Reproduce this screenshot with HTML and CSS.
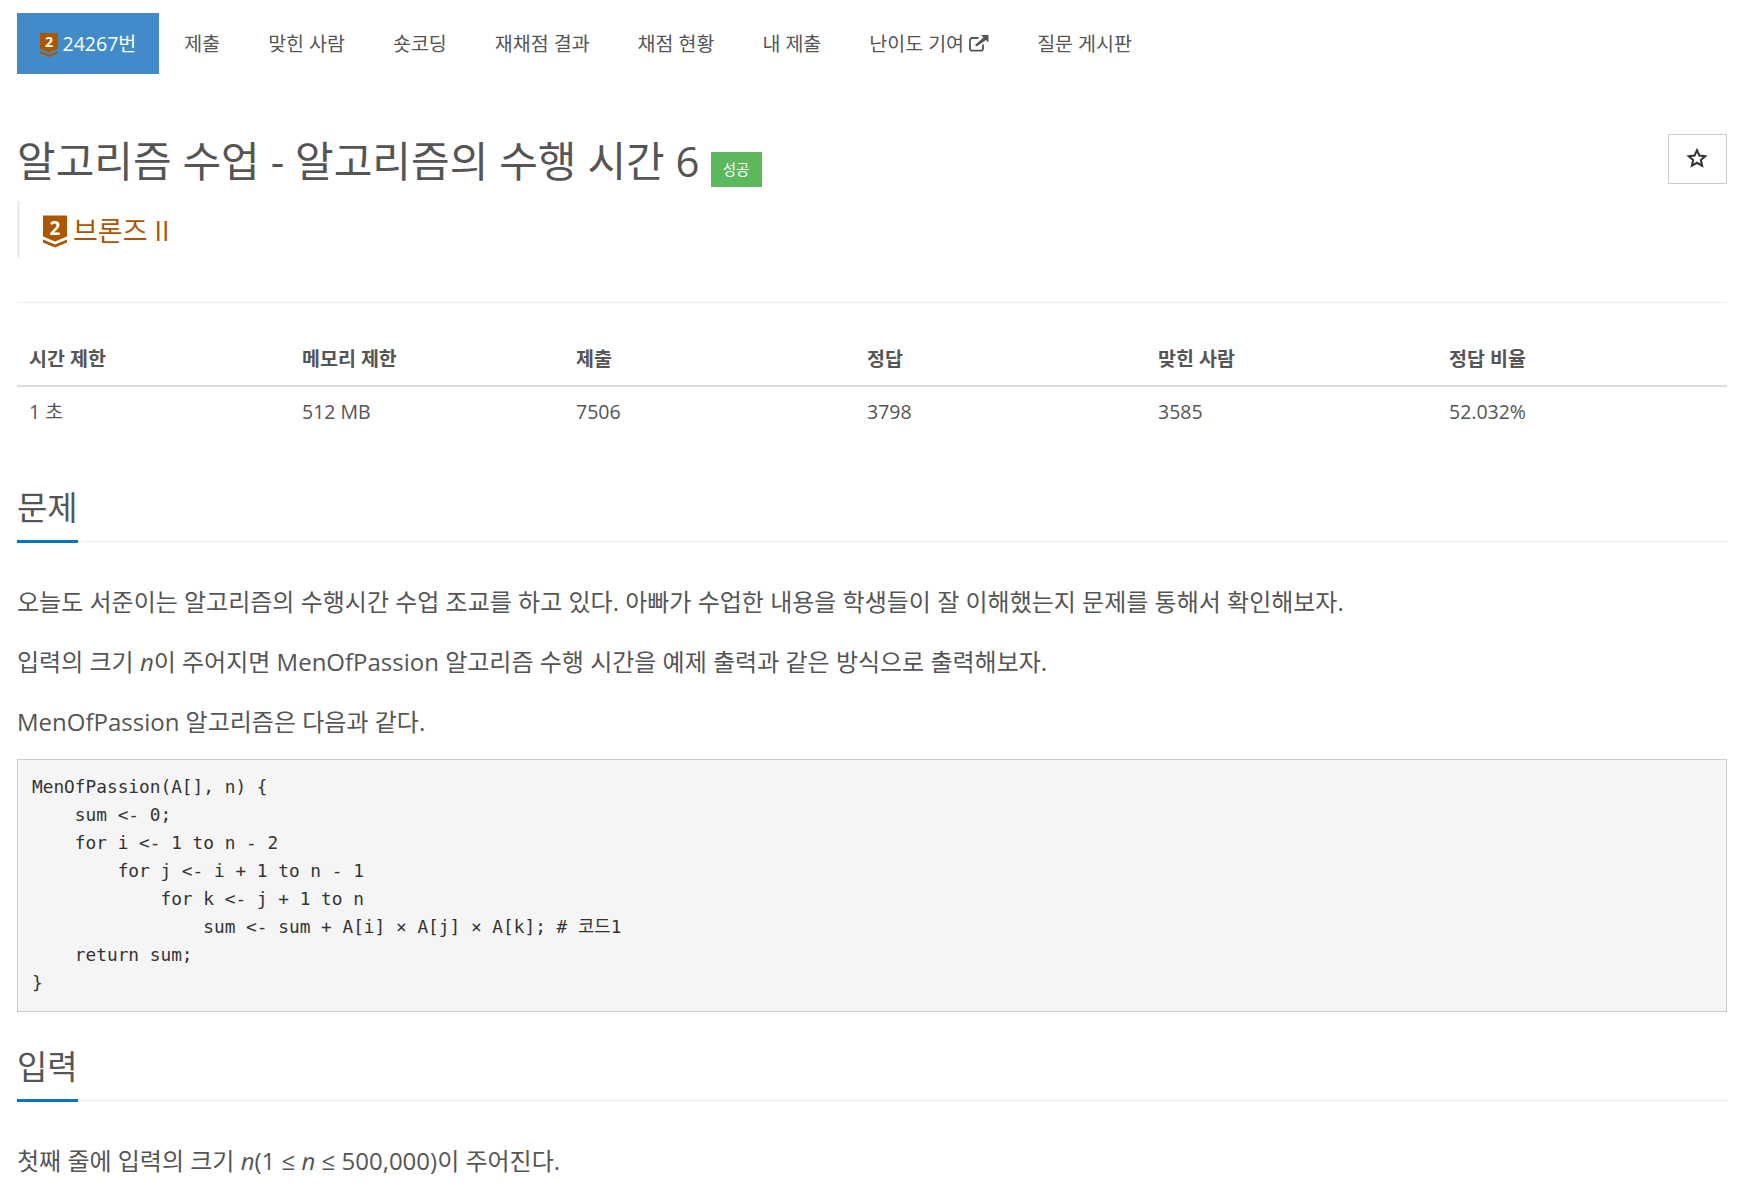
FILE: index.html
```html
<!DOCTYPE html>
<html lang="ko">
<head>
    <meta charset="UTF-8">
    <meta name="viewport" content="width=device-width, initial-scale=1.0">
    <title>24267번: 알고리즘 수업 - 알고리즘의 수행 시간 6</title>
    <link rel="stylesheet" href="styles.css">
</head>
<body>
    <ul class="tabs">
        <li class="active"><a href="#">
            <svg class="tier tier-small" viewBox="0 0 24 32"><path class="tier-fill" d="M0 0H24V21L12 26L0 21Z"/><path class="tier-fill" d="M0 24L12 29L24 24V27L12 32L0 27Z"/><text x="12" y="19" class="tier-num">2</text></svg>
            24267번</a></li>
        <li><a href="#">제출</a></li>
        <li><a href="#">맞힌 사람</a></li>
        <li><a href="#">숏코딩</a></li>
        <li><a href="#">재채점 결과</a></li>
        <li><a href="#">채점 현황</a></li>
        <li><a href="#">내 제출</a></li>
        <li><a href="#">난이도 기여
            <svg class="ext" viewBox="0 0 20 18"><path d="M14 10.500V14.500A2.200 2.200 0 0 1 11.800 16.700H3.200A2.200 2.200 0 0 1 1 14.500V6.200A2.200 2.200 0 0 1 3.200 4H9.500" fill="none" stroke="currentColor" stroke-width="1.800"/><path d="M7.500 12.500L6 11L14.500 3.500L12 1H19.500V8.500L17 6Z" fill="currentColor"/></svg></a></li>
        <li><a href="#">질문 게시판</a></li>
    </ul>

    <div class="title-row">
        <h1>알고리즘 수업 - 알고리즘의 수행 시간 6 <span class="label-success">성공</span></h1>
        <button class="star-btn" type="button">
            <svg viewBox="0 0 24 24"><path d="M12 3.500L14.600 9.300L21 10L16.200 14.200L17.600 20.500L12 17.200L6.400 20.500L7.800 14.200L3 10L9.400 9.300Z" fill="none" stroke="#333" stroke-width="2.200"/></svg>
        </button>
    </div>

    <blockquote class="tier-line">
        <svg class="tier tier-big" viewBox="0 0 24 32"><path class="tier-fill" d="M0 0H24V21L12 26L0 21Z"/><path class="tier-fill" d="M0 24L12 29L24 24V27L12 32L0 27Z"/><text x="12" y="19" class="tier-num">2</text></svg>
        <span>브론즈 II</span>
    </blockquote>

    <hr class="divider">

    <table class="info">
        <thead>
            <tr>
                <th class="c1">시간 제한</th>
                <th class="c2">메모리 제한</th>
                <th class="c3">제출</th>
                <th class="c3">정답</th>
                <th class="c3">맞힌 사람</th>
                <th>정답 비율</th>
            </tr>
        </thead>
        <tbody>
            <tr>
                <td>1 초</td>
                <td>512 MB</td>
                <td>7506</td>
                <td>3798</td>
                <td>3585</td>
                <td>52.032%</td>
            </tr>
        </tbody>
    </table>

    <section class="problem-section">
        <div class="headline"><h2>문제</h2></div>
        <p>오늘도 서준이는 알고리즘의 수행시간 수업 조교를 하고 있다. 아빠가 수업한 내용을 학생들이 잘 이해했는지 문제를 통해서 확인해보자.</p>
        <p>입력의 크기 <i>n</i>이 주어지면 MenOfPassion 알고리즘 수행 시간을 예제 출력과 같은 방식으로 출력해보자.</p>
        <p>MenOfPassion 알고리즘은 다음과 같다.</p>
        <pre>MenOfPassion(A[], n) {
    sum &lt;- 0;
    for i &lt;- 1 to n - 2
        for j &lt;- i + 1 to n - 1
            for k &lt;- j + 1 to n
                sum &lt;- sum + A[i] × A[j] × A[k]; # 코드1
    return sum;
}</pre>
    </section>

    <section class="problem-section">
        <div class="headline"><h2>입력</h2></div>
        <p>첫째 줄에 입력의 크기 <i>n</i>(1 ≤ <i>n</i> ≤ 500,000)이 주어진다.</p>
    </section>
</body>
</html>
```

FILE: styles.css
```css
html {
    overflow: hidden;
}
body {
    font-family: 'Open Sans', 'Noto Sans CJK KR', sans-serif;
    background-color: #fff;
    color: #555;
    margin: 0;
    padding: 13px 26px 0 17px;
    font-size: 14px;
}
.tabs {
    display: flex;
    list-style: none;
    margin: 0;
    padding: 0;
}
.tabs a {
    display: block;
    padding: 20px 24px 19px;
    height: 22px;
    line-height: 22px;
    font-size: 19.5px;
    color: #555;
    text-decoration: none;
    white-space: nowrap;
}
.tabs .active {
    margin-right: 1.5px;
}
.tabs .active a {
    background: #428bca;
    color: #fff;
    padding-left: 22.5px;
    padding-right: 22.5px;
}
.tier {
    vertical-align: middle;
}
.tier-small {
    width: 18px;
    height: 24px;
    margin-top: -1px;
}
.tier-big {
    width: 24px;
    height: 33px;
    margin: 3px 0 0 1px;
}
.tier-fill {
    fill: #ad5600;
}
.tier-num {
    fill: #fff;
    font-family: 'Open Sans', sans-serif;
    font-size: 19px;
    font-weight: 700;
    text-anchor: middle;
}
.ext {
    width: 20px;
    height: 18px;
    vertical-align: -1px;
}
.title-row {
    display: flex;
    justify-content: space-between;
    align-items: flex-start;
    margin-top: 60px;
}
h1 {
    margin: 0;
    font-size: 42px;
    font-weight: 400;
    line-height: 54px;
    color: #555;
}
.label-success {
    display: inline-block;
    background: #5cb85c;
    color: #fff;
    font-size: 14.5px;
    line-height: 35px;
    height: 35px;
    width: 51px;
    text-align: center;
    vertical-align: 2px;
}
.star-btn {
    width: 59px;
    height: 50px;
    padding: 0 2px 3px 0;
    background: #fff;
    border: 1px solid #ccc;
    display: flex;
    align-items: center;
    justify-content: center;
}
.star-btn svg {
    width: 22px;
    height: 22px;
}
.tier-line {
    margin: 13px 0 0;
    border-left: 3px solid #eee;
    height: 57px;
    padding-left: 22px;
    display: flex;
    align-items: center;
    gap: 6px;
    font-size: 27px;
    color: #ad5600;
}
.divider {
    border: 0;
    border-top: 1px solid #eee;
    margin: 44px 0 0;
}
.info {
    width: 100%;
    border-collapse: collapse;
    margin-top: 27px;
    margin-bottom: 27px;
    font-size: 19.5px;
    table-layout: fixed;
}
.info th, .info td {
    text-align: left;
    padding: 10px 12px 14px;
    line-height: 30px;
}
.info th {
    font-weight: 700;
    border-bottom: 2px solid #ddd;
    padding-top: 14px;
    padding-bottom: 11px;
}
.info .c1 {
    width: 249px;
}
.info .c2 {
    width: 250px;
}
.info .c3 {
    width: 267px;
}
.headline {
    border-bottom: 1px dotted #ddd;
    margin-top: 15px;
    height: 73px;
    margin-bottom: 37px;
}
.headline h2 {
    display: inline-block;
    margin: 0;
    padding-top: 8px;
    font-size: 33px;
    font-weight: 400;
    height: 64px;
    line-height: 64px;
    color: #555;
    border-bottom: 3px solid #0076c0;
}
p {
    margin: 0 0 15px;
    font-size: 24px;
    line-height: 45px;
}
pre {
    margin: 2px 0 0;
    padding: 13px 14px 12px;
    height: 226px;
    background: #f5f5f5;
    border: 1px solid #ccc;
    font-family: 'DejaVu Sans Mono', 'Noto Sans CJK KR', monospace;
    font-size: 17.8px;
    line-height: 28px;
    color: #333;
}
```
